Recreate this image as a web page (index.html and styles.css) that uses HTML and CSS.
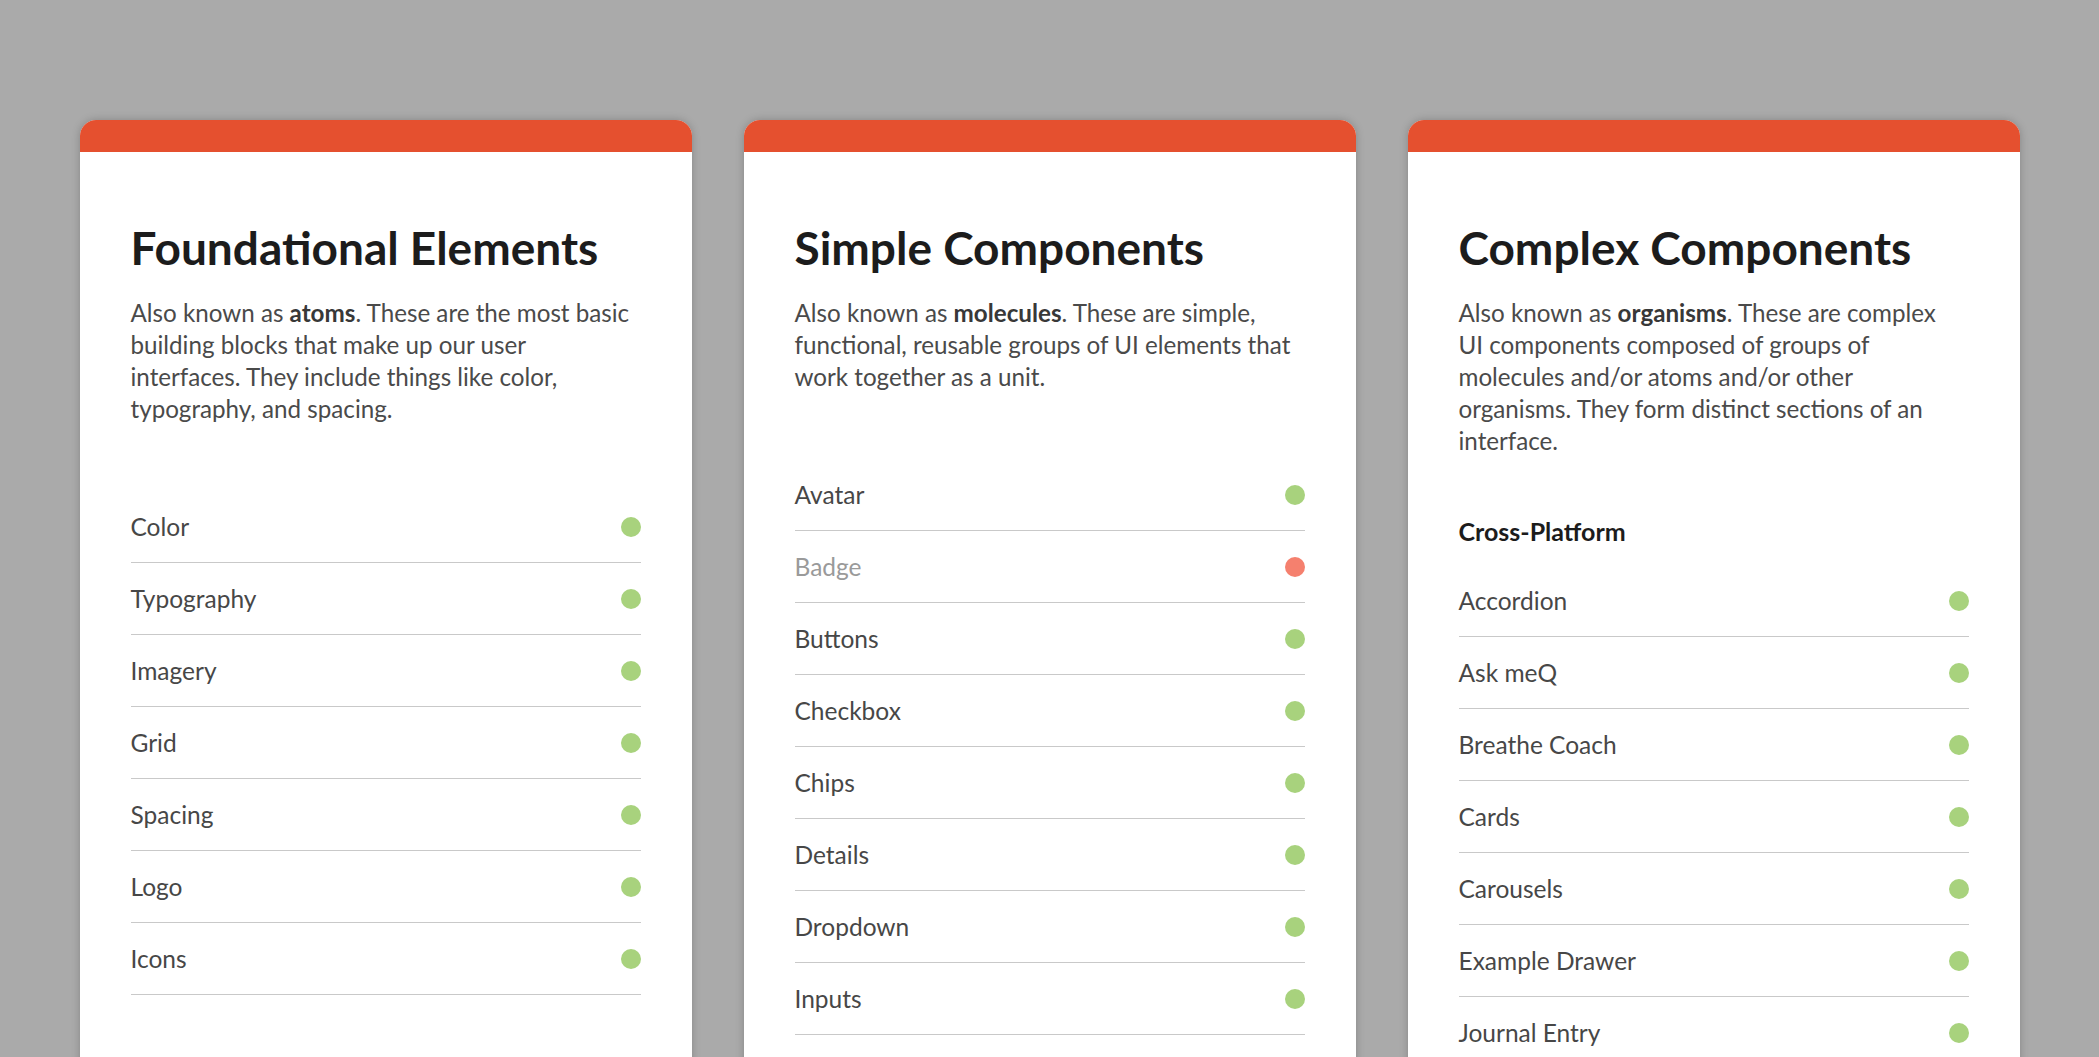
FILE: index.html
```html
<!DOCTYPE html>
<html lang="en">
<head>
<meta charset="utf-8">
<title>Design System Status</title>
<link rel="stylesheet" href="styles.css">
</head>
<body>
<main class="board">
  <section class="card">
    <div class="card-top"></div>
    <div class="card-body">
      <h2 class="card-title">Foundational Elements</h2>
      <p class="card-desc">Also known as <strong>atoms</strong>. These are the most basic<br>building blocks that make up our user<br>interfaces. They include things like color,<br>typography, and spacing.</p>
      <ul class="status-list">
        <li class="status-row"><span class="status-name">Color</span><span class="dot dot-ok"></span></li>
        <li class="status-row"><span class="status-name">Typography</span><span class="dot dot-ok"></span></li>
        <li class="status-row"><span class="status-name">Imagery</span><span class="dot dot-ok"></span></li>
        <li class="status-row"><span class="status-name">Grid</span><span class="dot dot-ok"></span></li>
        <li class="status-row"><span class="status-name">Spacing</span><span class="dot dot-ok"></span></li>
        <li class="status-row"><span class="status-name">Logo</span><span class="dot dot-ok"></span></li>
        <li class="status-row"><span class="status-name">Icons</span><span class="dot dot-ok"></span></li>
      </ul>
    </div>
  </section>

  <section class="card">
    <div class="card-top"></div>
    <div class="card-body">
      <h2 class="card-title">Simple Components</h2>
      <p class="card-desc">Also known as <strong>molecules</strong>. These are simple,<br>functional, reusable groups of UI elements that<br>work together as a unit.</p>
      <ul class="status-list">
        <li class="status-row"><span class="status-name">Avatar</span><span class="dot dot-ok"></span></li>
        <li class="status-row is-disabled"><span class="status-name">Badge</span><span class="dot dot-off"></span></li>
        <li class="status-row"><span class="status-name">Buttons</span><span class="dot dot-ok"></span></li>
        <li class="status-row"><span class="status-name">Checkbox</span><span class="dot dot-ok"></span></li>
        <li class="status-row"><span class="status-name">Chips</span><span class="dot dot-ok"></span></li>
        <li class="status-row"><span class="status-name">Details</span><span class="dot dot-ok"></span></li>
        <li class="status-row"><span class="status-name">Dropdown</span><span class="dot dot-ok"></span></li>
        <li class="status-row"><span class="status-name">Inputs</span><span class="dot dot-ok"></span></li>
      </ul>
    </div>
  </section>

  <section class="card">
    <div class="card-top"></div>
    <div class="card-body">
      <h2 class="card-title">Complex Components</h2>
      <p class="card-desc card-desc-tight">Also known as <strong>organisms</strong>. These are complex<br>UI components composed of groups of<br>molecules and/or atoms and/or other<br>organisms. They form distinct sections of an<br>interface.</p>
      <h3 class="group-title">Cross-Platform</h3>
      <ul class="status-list status-list-grouped">
        <li class="status-row"><span class="status-name">Accordion</span><span class="dot dot-ok"></span></li>
        <li class="status-row"><span class="status-name">Ask meQ</span><span class="dot dot-ok"></span></li>
        <li class="status-row"><span class="status-name">Breathe Coach</span><span class="dot dot-ok"></span></li>
        <li class="status-row"><span class="status-name">Cards</span><span class="dot dot-ok"></span></li>
        <li class="status-row"><span class="status-name">Carousels</span><span class="dot dot-ok"></span></li>
        <li class="status-row"><span class="status-name">Example Drawer</span><span class="dot dot-ok"></span></li>
        <li class="status-row"><span class="status-name">Journal Entry</span><span class="dot dot-ok"></span></li>
      </ul>
    </div>
  </section>
</main>
</body>
</html>
```

FILE: styles.css
```css
* {
  box-sizing: border-box;
}

html, body {
  margin: 0;
  padding: 0;
  height: 100%;
  overflow: hidden;
}

body {
  background: #aaaaaa;
  font-family: "Lato", "Noto Sans", sans-serif;
  color: #4a4a4a;
}

.board {
  display: grid;
  grid-template-columns: repeat(3, 612px);
  column-gap: 52px;
  justify-content: center;
  padding-top: 120px;
}

.card {
  background: #ffffff;
  border-radius: 16px 16px 0 0;
  box-shadow: 0 0 8px rgba(0, 0, 0, 0.22);
  min-height: 1000px;
}

.card-top {
  height: 32px;
  background: #e5502f;
  border-radius: 16px 16px 0 0;
}

.card-body {
  padding: 68px 51px 0;
}

.card-title {
  margin: 0;
  font-size: 46px;
  line-height: 56px;
  font-weight: 700;
  color: #1c1c1c;
}

.card-desc {
  margin: 21px 0 66px;
  font-size: 24.2px;
  line-height: 32px;
  color: #4a4a4a;
  white-space: nowrap;
}

.card-desc strong {
  color: #383838;
  font-weight: 700;
}

.card-desc-tight {
  margin-bottom: 58px;
}

.group-title {
  margin: 0 0 10px;
  font-size: 25px;
  line-height: 32px;
  font-weight: 700;
  color: #1c1c1c;
}

.status-list {
  list-style: none;
  margin: 0;
  padding: 0;
}

.status-list-grouped {
  margin-top: 18px;
}

.status-row {
  display: flex;
  align-items: center;
  justify-content: space-between;
  height: 72px;
  border-bottom: 1px solid #c9c9c9;
  font-size: 24.5px;
  color: #474747;
}

.is-disabled .status-name {
  color: #9a9a9a;
}

.dot {
  width: 20px;
  height: 20px;
  border-radius: 50%;
  flex: 0 0 auto;
}

.dot-ok {
  background: #a8d27d;
}

.dot-off {
  background: #f5806e;
}
```
